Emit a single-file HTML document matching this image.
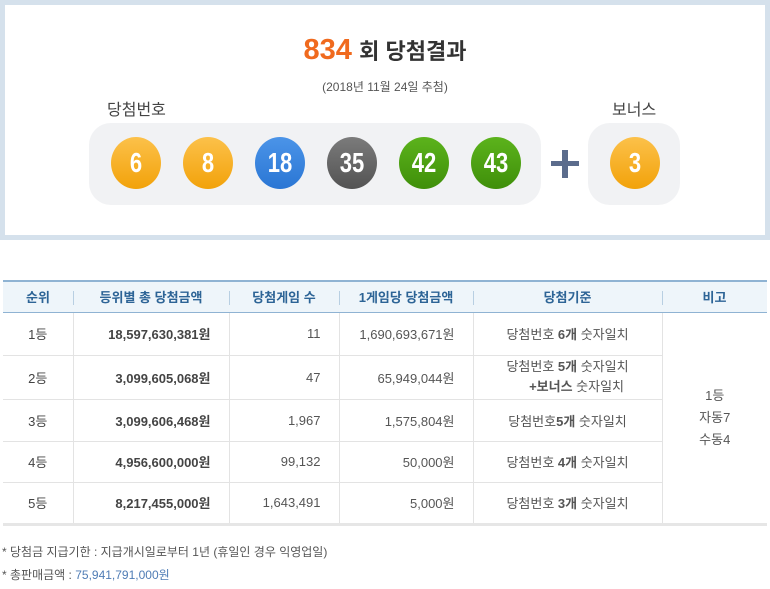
<!DOCTYPE html>
<html><head><meta charset="utf-8"><style>
*{margin:0;padding:0;box-sizing:border-box}
body{width:770px;height:589px;background:#fff;font-family:"Liberation Sans","Noto Sans CJK KR","NanumGothic",sans-serif;position:relative;overflow:hidden;color:#555}
.top{position:absolute;left:0;top:0;width:770px;height:240px;border:5px solid #d5e1ec;background:#fff}
.ab{position:absolute}
.ball{position:absolute;width:50px;height:52px;border-radius:50%;color:#fff;font-weight:bold;font-size:22px;text-align:center;line-height:52px}
.ball i{display:inline-block;font-style:normal;transform:scaleY(1.25)}
.y{background:linear-gradient(#fcc14a,#f2a20a)}
.b{background:linear-gradient(#4b94e8,#2a76d4)}
.g{background:linear-gradient(#7b7b7b,#535353)}
.gr{background:linear-gradient(#5cb31c,#3f8f0a)}
table{position:absolute;left:3px;top:280px;width:764px;border-collapse:collapse;font-size:13px}
th{height:31px;background:#eef5fa;border-top:2px solid #8fb3d3;border-bottom:1px solid #8fb3d3;color:#2d6496;font-weight:bold;position:relative}
td{border-bottom:1px solid #e3e3e3;border-left:1px solid #e3e3e3;text-align:center;color:#555;vertical-align:middle}
td:first-child{border-left:none;color:#444}
td.r{text-align:right;padding-right:18px}
td.bd{font-weight:bold;color:#444}
tr.last td{border-bottom:3px solid #e6e6e6}
th span{position:absolute;left:0;top:9px;height:14px;border-left:1px solid #b8cfe2}
</style></head><body>
<div class="top"></div>
<div class="ab" style="left:0;top:34px;width:770px;text-align:center;font-size:26px;font-weight:bold;color:#333"><span style="color:#f06a1e;font-size:29px">834</span> <span style="font-size:22px">회 당첨결과</span></div>
<div class="ab" style="left:0;top:78px;width:770px;text-align:center;font-size:12px;color:#555">(2018년 11월 24일 추첨)</div>
<div class="ab" style="left:107px;top:96px;font-size:16px;color:#444">당첨번호</div>
<div class="ab" style="left:612px;top:96px;font-size:16px;color:#444">보너스</div>
<div class="ab" style="left:89px;top:123px;width:452px;height:82px;background:#f1f2f4;border-radius:22px"></div>
<div class="ab" style="left:588px;top:123px;width:92px;height:82px;background:#f1f2f4;border-radius:22px"></div>
<div class="ball y" style="left:111px;top:137px"><i>6</i></div>
<div class="ball y" style="left:183px;top:137px"><i>8</i></div>
<div class="ball b" style="left:255px;top:137px"><i>18</i></div>
<div class="ball g" style="left:327px;top:137px"><i>35</i></div>
<div class="ball gr" style="left:399px;top:137px"><i>42</i></div>
<div class="ball gr" style="left:471px;top:137px"><i>43</i></div>
<div class="ab" style="left:551px;top:161px;width:28px;height:5px;background:#5b6c8c"></div>
<div class="ab" style="left:562px;top:150px;width:6px;height:28px;background:#5b6c8c"></div>
<div class="ball y" style="left:610px;top:137px"><i>3</i></div>
<table>
<tr><th style="width:70px">순위</th><th style="width:156px"><span></span>등위별 총 당첨금액</th><th style="width:110px"><span></span>당첨게임 수</th><th style="width:134px"><span></span>1게임당 당첨금액</th><th style="width:189px"><span></span>당첨기준</th><th><span></span>비고</th></tr>
<tr style="height:43px"><td>1등</td><td class="r bd">18,597,630,381원</td><td class="r">11</td><td class="r">1,690,693,671원</td><td>당첨번호 <b>6개</b> 숫자일치</td><td rowspan="5" style="border-bottom:3px solid #e6e6e6;line-height:22px">1등<br>자동7<br>수동4</td></tr>
<tr style="height:44px"><td>2등</td><td class="r bd">3,099,605,068원</td><td class="r">47</td><td class="r">65,949,044원</td><td style="line-height:20px">당첨번호 <b>5개</b> 숫자일치<br>&nbsp;&nbsp;&nbsp;&nbsp;&nbsp;<b>+보너스</b> 숫자일치</td></tr>
<tr style="height:42px"><td>3등</td><td class="r bd">3,099,606,468원</td><td class="r">1,967</td><td class="r">1,575,804원</td><td>당첨번호<b>5개</b> 숫자일치</td></tr>
<tr style="height:41px"><td>4등</td><td class="r bd">4,956,600,000원</td><td class="r">99,132</td><td class="r">50,000원</td><td>당첨번호 <b>4개</b> 숫자일치</td></tr>
<tr class="last" style="height:42px"><td>5등</td><td class="r bd">8,217,455,000원</td><td class="r">1,643,491</td><td class="r">5,000원</td><td>당첨번호 <b>3개</b> 숫자일치</td></tr>
</table>
<div class="ab" style="left:2px;top:543px;font-size:12px;color:#555">* 당첨금 지급기한 : 지급개시일로부터 1년 (휴일인 경우 익영업일)</div>
<div class="ab" style="left:2px;top:566px;font-size:12px;color:#555">* 총판매금액 : <span style="color:#4f7cb5">75,941,791,000원</span></div>
</body></html>
